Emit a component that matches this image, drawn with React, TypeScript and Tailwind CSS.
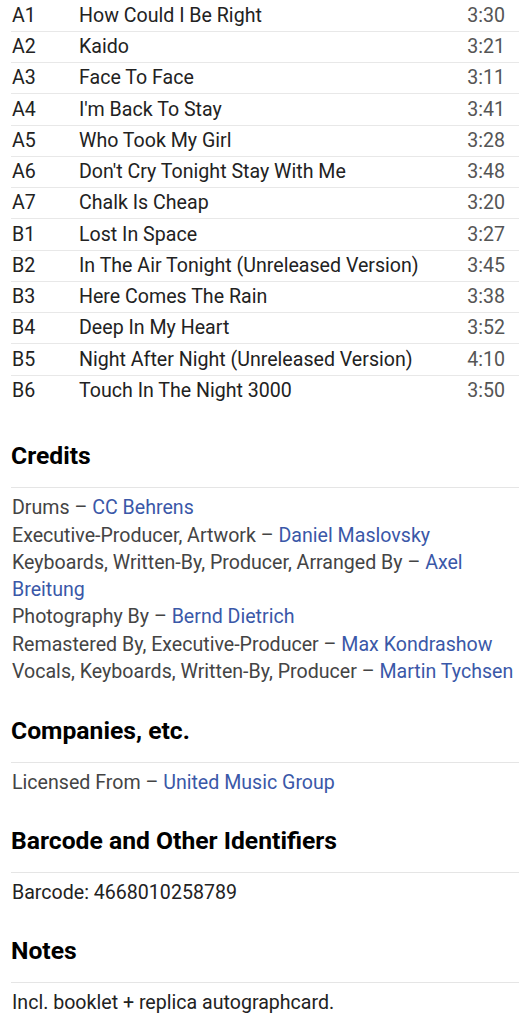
import React from 'react';

const tracks = [
  ['A1', 'How Could I Be Right', '3:30'],
  ['A2', 'Kaido', '3:21'],
  ['A3', 'Face To Face', '3:11'],
  ['A4', "I'm Back To Stay", '3:41'],
  ['A5', 'Who Took My Girl', '3:28'],
  ['A6', "Don't Cry Tonight Stay With Me", '3:48'],
  ['A7', 'Chalk Is Cheap', '3:20'],
  ['B1', 'Lost In Space', '3:27'],
  ['B2', 'In The Air Tonight (Unreleased Version)', '3:45'],
  ['B3', 'Here Comes The Rain', '3:38'],
  ['B4', 'Deep In My Heart', '3:52'],
  ['B5', 'Night After Night (Unreleased Version)', '4:10'],
  ['B6', 'Touch In The Night 3000', '3:50'],
];

const credits: [string, string][] = [
  ['Drums', 'CC Behrens'],
  ['Executive-Producer, Artwork', 'Daniel Maslovsky'],
  ['Keyboards, Written-By, Producer, Arranged By', 'Axel Breitung'],
  ['Photography By', 'Bernd Dietrich'],
  ['Remastered By, Executive-Producer', 'Max Kondrashow'],
  ['Vocals, Keyboards, Written-By, Producer', 'Martin Tychsen'],
];

function Section({ title, className, children }: { title: string; className: string; children: React.ReactNode }) {
  return (
    <section className={className}>
      <h2 className="text-[24.7px] leading-[30px] font-bold text-black pb-[16px] border-b border-[#e5e5e5]">{title}</h2>
      <div className="pt-[6px] text-[19.6px] leading-[27.3px] text-[#444]">{children}</div>
    </section>
  );
}

function Link({ children }: { children: React.ReactNode }) {
  return <a className="text-[#3a58a8]">{children}</a>;
}

export default function App() {
  return (
    <div className="w-[530px] bg-white px-[11px] pb-10" style={{ fontFamily: 'Roboto, "Noto Sans", sans-serif' }}>
      <table className="w-full border-collapse text-[19.6px]">
        <tbody>
          {tracks.map(([pos, title, dur], i) => (
            <tr key={pos} className={i < tracks.length - 1 ? 'border-b border-[#e8e8e8]' : ''}>
              <td className="h-[31.25px] w-[68px] pl-[1px] p-0 text-[#222]">{pos}</td>
              <td className="p-0 text-[#222]">{title}</td>
              <td className="p-0 pr-[14px] text-right text-[#555]">{dur}</td>
            </tr>
          ))}
        </tbody>
      </table>

      <Section title="Credits" className="mt-[35px]">
        {credits.map(([role, name]) => (
          <div key={name} className="pl-[1px]">
            {role} – <Link>{name}</Link>
          </div>
        ))}
      </Section>

      <Section title="Companies, etc." className="mt-[31px]">
        <div className="pl-[1px]">
          Licensed From – <Link>United Music Group</Link>
        </div>
      </Section>

      <Section title="Barcode and Other Identifiers" className="mt-[29px]">
        <div className="pl-[1px] text-[#222]">Barcode: 4668010258789</div>
      </Section>

      <Section title="Notes" className="mt-[30px]">
        <div className="pl-[1px] text-[#222]">Incl. booklet + replica autographcard.</div>
      </Section>
    </div>
  );
}
